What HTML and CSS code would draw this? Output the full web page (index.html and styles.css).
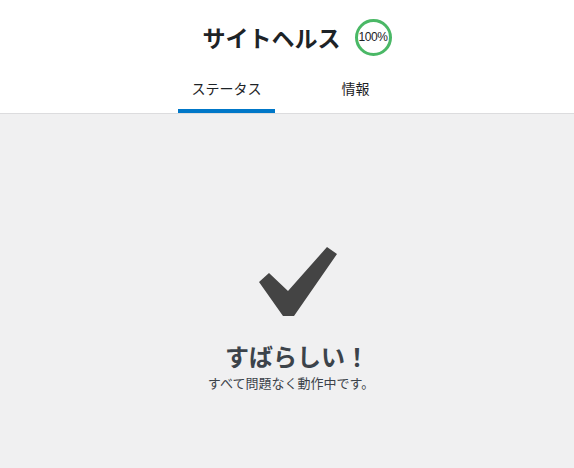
FILE: index.html
```html
<!DOCTYPE html>
<html lang="ja">
<head>
<meta charset="utf-8">
<link rel="stylesheet" href="styles.css">
</head>
<body>
<div class="header">
  <div class="title-section">
    <h1>サイトヘルス</h1>
    <div class="score">100%</div>
  </div>
  <nav class="tabs">
    <a class="tab active">ステータス</a>
    <a class="tab">情報</a>
  </nav>
</div>
<main class="content">
  <svg class="check" width="100" height="80" viewBox="0 0 100 80">
    <polygon points="18,45 28,36 47,54 86,10 96,17 53,79 42,79" fill="#444"/>
  </svg>
  <h2 class="great">すばらしい！</h2>
  <p class="msg">すべて問題なく動作中です。</p>
</main>
</body>
</html>
```
FILE: styles.css
```css
html, body {
  margin: 0;
  padding: 0;
  background: #f0f0f1;
  font-family: "Noto Sans CJK JP", "Noto Sans", sans-serif;
  color: #1d2327;
}
.header {
  background: #fff;
  border-bottom: 1px solid #dcdcde;
  padding-left: 8px;
  height: 113px;
  box-sizing: content-box;
  display: flex;
  flex-direction: column;
  align-items: center;
}
.title-section {
  display: flex;
  align-items: center;
  justify-content: center;
  padding-top: 17px;
  height: 40px;
}
.title-section h1 {
  margin: 0 14px 0 12px;
  font-size: 23px;
  font-weight: 700;
  line-height: 40px;
  color: #1d2327;
}
.score {
  width: 31px;
  height: 31px;
  border: 3px solid #4ab866;
  border-radius: 50%;
  display: flex;
  align-items: center;
  justify-content: center;
  font-size: 12px;
  color: #1d2327;
  font-family: "Liberation Sans", "Noto Sans CJK JP", sans-serif;
  letter-spacing: -0.4px;
}
.tabs {
  display: grid;
  grid-template-columns: 1fr 1fr;
  margin-top: 21px;
}
.tab {
  display: block;
  width: 97px;
  margin: 0 16px;
  text-align: center;
  font-size: 14px;
  line-height: 20px;
  padding-bottom: 11px;
  color: #1d2327;
  border-bottom: 4px solid transparent;
}
.tab.active {
  border-bottom-color: #0077c8;
}
.content {
  padding-left: 8px;
  display: flex;
  flex-direction: column;
  align-items: center;
  padding-top: 123px;
}
.check {
  display: block;
}
.great {
  margin: 22px 0 0 12px;
  font-size: 24px;
  line-height: 34px;
  font-weight: 700;
  color: #3c434a;
}
.msg {
  margin: 0;
  font-size: 13px;
  line-height: 20px;
  color: #3c434a;
}
```
